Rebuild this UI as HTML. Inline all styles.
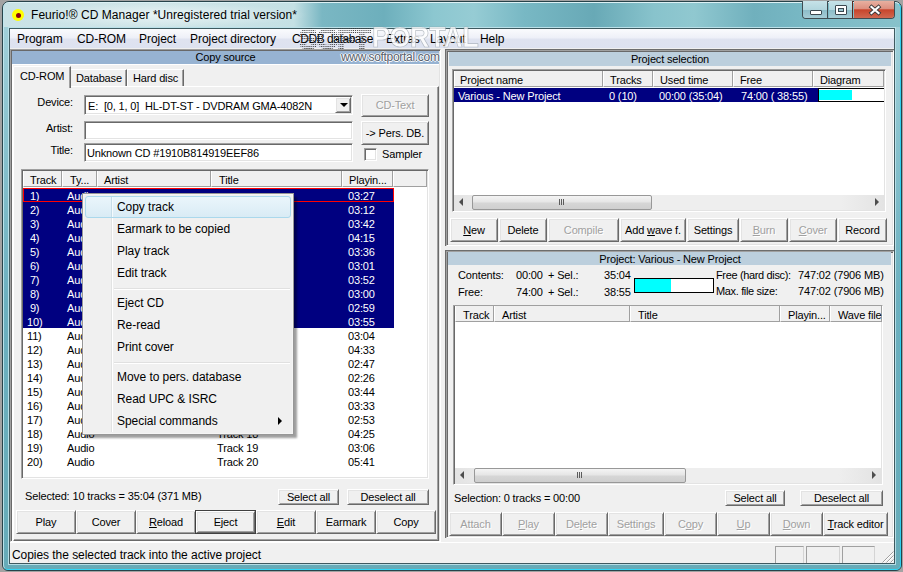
<!DOCTYPE html>
<html><head><meta charset="utf-8">
<style>
*{margin:0;padding:0;box-sizing:border-box}
html,body{width:903px;height:572px;overflow:hidden;background:#a3a3a3}
body{position:relative;font-family:"Liberation Sans",sans-serif;font-size:11px;color:#000}
.a{position:absolute}
.t{position:absolute;white-space:nowrap;line-height:14px;letter-spacing:-0.15px}
.raised{border:1px solid;border-color:#fff #696969 #696969 #fff;box-shadow:inset 1px 1px #e3e3e3,inset -1px -1px #a0a0a0;background:#f0f0f0}
.sunk{border:1px solid;border-color:#a0a0a0 #fff #fff #a0a0a0;box-shadow:inset 1px 1px #696969,inset -1px -1px #e3e3e3}
.btn{position:absolute;letter-spacing:-0.15px;border:1px solid;border-color:#fff #696969 #696969 #fff;box-shadow:inset 1px 1px #e3e3e3,inset -1px -1px #a0a0a0;background:#f0f0f0;text-align:center;line-height:20px;white-space:nowrap}
.dis{color:#a0a0a0;text-shadow:1px 1px #fff}
.seg{font-size:12px;letter-spacing:-0.05px}
</style></head><body>
<!-- window frame -->
<div class="a" style="left:2px;top:1px;width:900px;height:570px;border-radius:7px 7px 6px 6px;background:linear-gradient(#a6d3dc 0px,#8cc4cf 120px,#6cb0bf 300px,#66abb8 570px);border:1px solid #27434a"></div>
<div class="a" style="left:3px;top:2px;width:898px;height:568px;border-radius:6px 6px 5px 5px;border:1px solid;border-color:rgba(230,246,250,.85) #30d0f0 #30d8f8 rgba(200,235,242,.85)"></div>
<div class="a" style="left:4px;top:3px;width:896px;height:24px;border-radius:5px 5px 0 0;background:linear-gradient(90deg,#c9e2e6 0px,#cfe5e8 150px,#c4e0e4 290px,#7ab7c3 318px,#6dafbc 380px,#8cc7d0 430px,#96ccd4 470px,#78b8c4 520px,#68a9b6 590px,#88c3cc 650px,#90c8d0 690px,#70b0bd 750px,#78b8c4 800px,#88c2cb 900px)"></div>
<div class="a" style="left:20px;top:3px;width:290px;height:24px;background:radial-gradient(ellipse at center,rgba(255,255,255,.55),rgba(255,255,255,0) 70%)"></div>
<!-- caption buttons -->
<div class="a" style="left:802px;top:1px;width:93px;height:18px;border:1px solid #404c52;border-top:none;border-radius:0 0 4px 4px;overflow:hidden">
 <div class="a" style="left:0;top:0;width:25px;height:17px;background:linear-gradient(#c6e2e8 0%,#b2d6de 50%,#8cbcc8 52%,#a6ccd6 100%);border-right:1px solid #3e4a50"></div>
 <div class="a" style="left:26px;top:0;width:24px;height:17px;background:linear-gradient(#c6e2e8 0%,#b2d6de 50%,#8cbcc8 52%,#a6ccd6 100%);border-right:1px solid #5a2a20"></div>
 <div class="a" style="left:51px;top:0;width:42px;height:17px;background:linear-gradient(#e8b0a0 0%,#dc9080 45%,#c8452c 52%,#d06850 100%)"></div>
 <div class="a" style="left:7px;top:9px;width:12px;height:5px;background:#fff;border:1px solid #3c4850;border-radius:1px"></div>
 <div class="a" style="left:32px;top:4px;width:12px;height:10px;border:1px solid #3c4850;border-radius:1px;background:#fff"></div>
 <div class="a" style="left:35px;top:7px;width:6px;height:4px;border:1px solid #3c4850;background:#9cc6d0"></div>
 <svg class="a" style="left:64px;top:3px" width="16" height="12"><path d="M4.5 3L11.5 9M11.5 3L4.5 9" stroke="#3a3a3a" stroke-width="4" stroke-linecap="square"/><path d="M4.5 3L11.5 9M11.5 3L4.5 9" stroke="#fff" stroke-width="2.2" stroke-linecap="square"/></svg>
</div>
<!-- title -->
<div class="a" style="left:12px;top:9px;width:12px;height:12px;border-radius:50%;background:#ffff00"></div>
<div class="a" style="left:16px;top:13px;width:5px;height:5px;border-radius:50%;background:#8b0010"></div>
<div class="t seg" style="left:31px;top:8px;letter-spacing:0.05px;color:#000">Feurio!® CD Manager *Unregistered trial version*</div>
<!-- client -->
<div class="a" style="left:9px;top:28px;width:886px;height:536px;background:#f0f0f0;border:1px solid #3e5a60;box-shadow:0 0 0 1px rgba(190,226,234,.9)"></div>
<!-- menu bar -->
<div class="a" style="left:10px;top:29px;width:884px;height:19px;background:linear-gradient(#fafbfd 0%,#eef0f8 45%,#dfe3f0 55%,#dde2f0 100%)"></div>
<div class="t seg" style="left:17px;top:32px">Program</div>
<div class="t seg" style="left:77px;top:32px">CD-ROM</div>
<div class="t seg" style="left:139px;top:32px">Project</div>
<div class="t seg" style="left:190px;top:32px">Project directory</div>
<div class="t seg" style="left:292px;top:32px;letter-spacing:-0.45px">CDDB database</div>
<div class="t seg" style="left:386px;top:32px">Extras</div>
<div class="t seg" style="left:430px;top:32px">Layout</div>
<div class="t seg" style="left:480px;top:32px">Help</div>

<!-- LEFT PANEL -->
<div class="a sunk" style="left:10px;top:49px;width:431px;height:493px"></div>
<div class="a" style="left:12px;top:51px;width:427px;height:13px;background:#97b3d2"></div>
<div class="t" style="left:12px;top:50px;width:427px;text-align:center">Copy source</div>

<div class="a" style="left:12px;top:64px;width:427px;height:477px;border-left:1px solid #fff;border-top:1px solid #fff"></div>
<div class="a" style="left:13px;top:86px;width:426px;height:455px;border:1px solid;border-color:#fff #696969 #696969 #fff;box-shadow:inset -1px -1px #a0a0a0"></div>
<div class="a" style="left:70px;top:69px;width:57px;height:17px;border:1px solid;border-bottom:none;border-color:#fff #696969 #fff #fff;box-shadow:inset -1px 0 #a0a0a0;background:#f0f0f0"></div>
<div class="a" style="left:127px;top:69px;width:57px;height:17px;border:1px solid;border-bottom:none;border-color:#fff #696969 #fff #fff;box-shadow:inset -1px 0 #a0a0a0;background:#f0f0f0"></div>
<div class="a" style="left:13px;top:66px;width:58px;height:22px;border:1px solid;border-bottom:none;border-color:#fff #696969 #fff #fff;box-shadow:inset -1px 0 #a0a0a0;background:#f0f0f0;border-top-left-radius:2px"></div>
<div class="t" style="left:20px;top:69px">CD-ROM</div>
<div class="t" style="left:76px;top:71px">Database</div>
<div class="t" style="left:133px;top:71px">Hard disc</div>
<div class="t" style="left:20px;width:53px;text-align:right;top:95px">Device:</div>
<div class="t" style="left:20px;width:53px;text-align:right;top:121px">Artist:</div>
<div class="t" style="left:20px;width:53px;text-align:right;top:143px">Title:</div>
<div class="a sunk" style="left:84px;top:95px;width:269px;height:20px;background:#fff"></div>
<div class="t" style="left:88px;top:99px">E:&nbsp; [0, 1, 0]&nbsp; HL-DT-ST - DVDRAM GMA-4082N</div>
<div class="a raised" style="left:335px;top:97px;width:16px;height:16px"></div>
<div class="a" style="left:340px;top:103px;width:0;height:0;border-left:4px solid transparent;border-right:4px solid transparent;border-top:4px solid #000"></div>
<div class="a sunk" style="left:84px;top:121px;width:269px;height:19px;background:#fff"></div>
<div class="a sunk" style="left:84px;top:143px;width:269px;height:19px;background:#fff"></div>
<div class="t" style="left:87px;top:146px">Unknown CD #1910B814919EEF86</div>
<div class="btn dis" style="left:361px;top:94px;width:68px;height:23px;line-height:21px">CD-Text</div>
<div class="btn" style="left:361px;top:121px;width:68px;height:24px;line-height:22px">-&gt; Pers. DB.</div>
<div class="a sunk" style="left:364px;top:148px;width:13px;height:13px;background:#fff"></div>
<div class="t" style="left:382px;top:147px">Sampler</div>
<div class="a sunk" style="left:21px;top:169px;width:408px;height:310px;background:#fff"></div>
<div class="a" style="left:23px;top:171px;width:404px;height:16px;background:#f0f0f0;border-bottom:1px solid #a0a0a0"></div>
<div class="a" style="left:23px;top:171px;width:39px;height:16px;border-left:1px solid #fff;border-right:1px solid #a0a0a0;border-bottom:1px solid #a0a0a0"></div>
<div class="t" style="left:30px;top:173px">Track</div>
<div class="a" style="left:62px;top:171px;width:35px;height:16px;border-left:1px solid #fff;border-right:1px solid #a0a0a0;border-bottom:1px solid #a0a0a0"></div>
<div class="t" style="left:70px;top:173px">Ty...</div>
<div class="a" style="left:97px;top:171px;width:114px;height:16px;border-left:1px solid #fff;border-right:1px solid #a0a0a0;border-bottom:1px solid #a0a0a0"></div>
<div class="t" style="left:104px;top:173px">Artist</div>
<div class="a" style="left:211px;top:171px;width:131px;height:16px;border-left:1px solid #fff;border-right:1px solid #a0a0a0;border-bottom:1px solid #a0a0a0"></div>
<div class="t" style="left:219px;top:173px">Title</div>
<div class="a" style="left:342px;top:171px;width:51px;height:16px;border-left:1px solid #fff;border-right:1px solid #a0a0a0;border-bottom:1px solid #a0a0a0"></div>
<div class="t" style="left:349px;top:173px">Playin...</div>
<div class="a" style="left:393px;top:171px;width:34px;height:16px;border-left:1px solid #fff;border-right:1px solid #a0a0a0;border-bottom:1px solid #a0a0a0"></div>
<div class="a" style="left:23px;top:188px;width:371px;height:14px;background:#000080"></div>
<div class="t" style="left:27px;top:189px;color:#fff">&nbsp;1)</div>
<div class="t" style="left:67px;top:189px;color:#fff">Audio</div>
<div class="t" style="left:348px;top:189px;color:#fff">03:27</div>
<div class="a" style="left:23px;top:202px;width:371px;height:14px;background:#000080"></div>
<div class="t" style="left:27px;top:203px;color:#fff">&nbsp;2)</div>
<div class="t" style="left:67px;top:203px;color:#fff">Audio</div>
<div class="t" style="left:348px;top:203px;color:#fff">03:12</div>
<div class="a" style="left:23px;top:216px;width:371px;height:14px;background:#000080"></div>
<div class="t" style="left:27px;top:217px;color:#fff">&nbsp;3)</div>
<div class="t" style="left:67px;top:217px;color:#fff">Audio</div>
<div class="t" style="left:348px;top:217px;color:#fff">03:42</div>
<div class="a" style="left:23px;top:230px;width:371px;height:14px;background:#000080"></div>
<div class="t" style="left:27px;top:231px;color:#fff">&nbsp;4)</div>
<div class="t" style="left:67px;top:231px;color:#fff">Audio</div>
<div class="t" style="left:348px;top:231px;color:#fff">04:15</div>
<div class="a" style="left:23px;top:244px;width:371px;height:14px;background:#000080"></div>
<div class="t" style="left:27px;top:245px;color:#fff">&nbsp;5)</div>
<div class="t" style="left:67px;top:245px;color:#fff">Audio</div>
<div class="t" style="left:348px;top:245px;color:#fff">03:36</div>
<div class="a" style="left:23px;top:258px;width:371px;height:14px;background:#000080"></div>
<div class="t" style="left:27px;top:259px;color:#fff">&nbsp;6)</div>
<div class="t" style="left:67px;top:259px;color:#fff">Audio</div>
<div class="t" style="left:348px;top:259px;color:#fff">03:01</div>
<div class="a" style="left:23px;top:272px;width:371px;height:14px;background:#000080"></div>
<div class="t" style="left:27px;top:273px;color:#fff">&nbsp;7)</div>
<div class="t" style="left:67px;top:273px;color:#fff">Audio</div>
<div class="t" style="left:348px;top:273px;color:#fff">03:52</div>
<div class="a" style="left:23px;top:286px;width:371px;height:14px;background:#000080"></div>
<div class="t" style="left:27px;top:287px;color:#fff">&nbsp;8)</div>
<div class="t" style="left:67px;top:287px;color:#fff">Audio</div>
<div class="t" style="left:348px;top:287px;color:#fff">03:00</div>
<div class="a" style="left:23px;top:300px;width:371px;height:14px;background:#000080"></div>
<div class="t" style="left:27px;top:301px;color:#fff">&nbsp;9)</div>
<div class="t" style="left:67px;top:301px;color:#fff">Audio</div>
<div class="t" style="left:348px;top:301px;color:#fff">02:59</div>
<div class="a" style="left:23px;top:314px;width:371px;height:14px;background:#000080"></div>
<div class="t" style="left:27px;top:315px;color:#fff">10)</div>
<div class="t" style="left:67px;top:315px;color:#fff">Audio</div>
<div class="t" style="left:348px;top:315px;color:#fff">03:55</div>
<div class="t" style="left:27px;top:329px;color:#000">11)</div>
<div class="t" style="left:67px;top:329px;color:#000">Audio</div>
<div class="t" style="left:348px;top:329px;color:#000">03:04</div>
<div class="t" style="left:27px;top:343px;color:#000">12)</div>
<div class="t" style="left:67px;top:343px;color:#000">Audio</div>
<div class="t" style="left:348px;top:343px;color:#000">04:33</div>
<div class="t" style="left:27px;top:357px;color:#000">13)</div>
<div class="t" style="left:67px;top:357px;color:#000">Audio</div>
<div class="t" style="left:348px;top:357px;color:#000">02:47</div>
<div class="t" style="left:27px;top:371px;color:#000">14)</div>
<div class="t" style="left:67px;top:371px;color:#000">Audio</div>
<div class="t" style="left:348px;top:371px;color:#000">02:26</div>
<div class="t" style="left:27px;top:385px;color:#000">15)</div>
<div class="t" style="left:67px;top:385px;color:#000">Audio</div>
<div class="t" style="left:348px;top:385px;color:#000">03:44</div>
<div class="t" style="left:27px;top:399px;color:#000">16)</div>
<div class="t" style="left:67px;top:399px;color:#000">Audio</div>
<div class="t" style="left:348px;top:399px;color:#000">03:33</div>
<div class="t" style="left:27px;top:413px;color:#000">17)</div>
<div class="t" style="left:67px;top:413px;color:#000">Audio</div>
<div class="t" style="left:348px;top:413px;color:#000">02:53</div>
<div class="t" style="left:27px;top:427px;color:#000">18)</div>
<div class="t" style="left:67px;top:427px;color:#000">Audio</div>
<div class="t" style="left:217px;top:427px;color:#000">Track 18</div>
<div class="t" style="left:348px;top:427px;color:#000">04:25</div>
<div class="t" style="left:27px;top:441px;color:#000">19)</div>
<div class="t" style="left:67px;top:441px;color:#000">Audio</div>
<div class="t" style="left:217px;top:441px;color:#000">Track 19</div>
<div class="t" style="left:348px;top:441px;color:#000">03:06</div>
<div class="t" style="left:27px;top:455px;color:#000">20)</div>
<div class="t" style="left:67px;top:455px;color:#000">Audio</div>
<div class="t" style="left:217px;top:455px;color:#000">Track 20</div>
<div class="t" style="left:348px;top:455px;color:#000">05:41</div>
<div class="a" style="left:23px;top:188px;width:371px;height:14px;border:1px solid #ff0000"></div>
<div class="t" style="left:25px;top:489px">Selected: 10 tracks = 35:04 (371 MB)</div>
<div class="btn" style="left:278px;top:489px;width:61px;height:16px;line-height:14px">Select all</div>
<div class="btn" style="left:347px;top:489px;width:82px;height:16px;line-height:14px">Deselect all</div>
<div class="btn" style="left:16px;top:510px;width:60px;height:24px;line-height:22px">Play</div>
<div class="btn" style="left:76px;top:510px;width:60px;height:24px;line-height:22px">Cover</div>
<div class="btn" style="left:136px;top:510px;width:60px;height:24px;line-height:22px"><u>R</u>eload</div>
<div class="btn" style="left:196px;top:511px;width:59px;height:22px;line-height:20px">Eject</div>
<div class="btn" style="left:256px;top:510px;width:60px;height:24px;line-height:22px"><u>E</u>dit</div>
<div class="btn" style="left:316px;top:510px;width:60px;height:24px;line-height:22px">Earmark</div>
<div class="btn" style="left:376px;top:510px;width:60px;height:24px;line-height:22px">Copy</div>
<div class="a" style="left:195px;top:510px;width:61px;height:24px;border:1px solid #404040"></div>
<!-- MENU -->
<div class="a" style="left:82px;top:193px;width:212px;height:242px;background:#f0f0f0;border:1px solid #979797;box-shadow:3px 3px 2px -0.5px rgba(0,0,0,.38)"></div>
<div class="a" style="left:83px;top:194px;width:210px;height:240px;border:1px solid #f5f5f5"></div>
<div class="a" style="left:111px;top:196px;width:1px;height:236px;background:#e2e3e3"></div>
<div class="a" style="left:112px;top:196px;width:1px;height:236px;background:#fff"></div>
<div class="a" style="left:85px;top:196px;width:206px;height:22px;border:1px solid #aad8ec;border-radius:3px;background:linear-gradient(#eaf5fb,#d9ebf5)"></div>
<div class="a" style="left:111px;top:197px;width:1px;height:20px;background:#c6dde9"></div><div class="a" style="left:112px;top:197px;width:1px;height:20px;background:#f4fafd"></div>
<div class="t seg" style="left:117px;top:200px">Copy track</div>
<div class="t seg" style="left:117px;top:222px">Earmark to be copied</div>
<div class="t seg" style="left:117px;top:244px">Play track</div>
<div class="t seg" style="left:117px;top:266px">Edit track</div>
<div class="t seg" style="left:117px;top:296px">Eject CD</div>
<div class="t seg" style="left:117px;top:318px">Re-read</div>
<div class="t seg" style="left:117px;top:340px">Print cover</div>
<div class="t seg" style="left:117px;top:370px">Move to pers. database</div>
<div class="t seg" style="left:117px;top:392px">Read UPC &amp; ISRC</div>
<div class="t seg" style="left:117px;top:414px">Special commands</div>
<div class="a" style="left:114px;top:288px;width:176px;height:1px;background:#e0e0e0"></div>
<div class="a" style="left:114px;top:289px;width:176px;height:1px;background:#fff"></div>
<div class="a" style="left:114px;top:362px;width:176px;height:1px;background:#e0e0e0"></div>
<div class="a" style="left:114px;top:363px;width:176px;height:1px;background:#fff"></div>
<div class="a" style="left:278px;top:417px;width:0;height:0;border-top:4px solid transparent;border-bottom:4px solid transparent;border-left:4px solid #000"></div>
<!-- RIGHT PANELS -->
<div class="a" style="left:445px;top:49px;width:449px;height:197px;border-left:1px solid #6d6d6d;border-top:1px solid #6d6d6d"></div>
<div class="a sunk" style="left:446px;top:50px;width:448px;height:196px"></div>
<div class="a" style="left:449px;top:52px;width:442px;height:14px;background:#bccfdd"></div>
<div class="t" style="left:449px;top:52px;width:442px;text-align:center">Project selection</div>
<div class="a sunk" style="left:452px;top:69px;width:434px;height:143px;background:#fff"></div>
<div class="a" style="left:454px;top:71px;width:430px;height:16px;background:#f0f0f0"></div>
<div class="a" style="left:454px;top:71px;width:149px;height:16px;border-left:1px solid #fff;border-right:1px solid #a0a0a0;border-bottom:1px solid #a0a0a0"></div>
<div class="t" style="left:460px;top:73px">Project name</div>
<div class="a" style="left:603px;top:71px;width:50px;height:16px;border-left:1px solid #fff;border-right:1px solid #a0a0a0;border-bottom:1px solid #a0a0a0"></div>
<div class="t" style="left:610px;top:73px">Tracks</div>
<div class="a" style="left:653px;top:71px;width:80px;height:16px;border-left:1px solid #fff;border-right:1px solid #a0a0a0;border-bottom:1px solid #a0a0a0"></div>
<div class="t" style="left:660px;top:73px">Used time</div>
<div class="a" style="left:733px;top:71px;width:80px;height:16px;border-left:1px solid #fff;border-right:1px solid #a0a0a0;border-bottom:1px solid #a0a0a0"></div>
<div class="t" style="left:740px;top:73px">Free</div>
<div class="a" style="left:813px;top:71px;width:71px;height:16px;border-left:1px solid #fff;border-right:1px solid #a0a0a0;border-bottom:1px solid #a0a0a0"></div>
<div class="t" style="left:820px;top:73px">Diagram</div>
<div class="a" style="left:454px;top:88px;width:430px;height:14px;background:#000080"></div>
<div class="t" style="left:458px;top:89px;color:#fff">Various - New Project</div>
<div class="t" style="left:609px;top:89px;color:#fff">0 (10)</div>
<div class="t" style="left:659px;top:89px;color:#fff">00:00 (35:04)</div>
<div class="t" style="left:741px;top:89px;color:#fff">74:00 ( 38:55)</div>
<div class="a" style="left:818px;top:88px;width:66px;height:14px;background:#000"></div>
<div class="a" style="left:819px;top:89px;width:65px;height:12px;background:#fff"></div>
<div class="a" style="left:819px;top:90px;width:33px;height:10px;background:#00ffff"></div>
<div class="a" style="left:454px;top:195px;width:430px;height:15px;background:linear-gradient(90deg,#e3e3e3,#eeeeee 10%,#eeeeee 90%,#e3e3e3)"></div>
<div class="a" style="left:459px;top:198px;width:0;height:0;border-top:4px solid transparent;border-bottom:4px solid transparent;border-right:4px solid #4d4d4d"></div>
<div class="a" style="left:875px;top:198px;width:0;height:0;border-top:4px solid transparent;border-bottom:4px solid transparent;border-left:4px solid #4d4d4d"></div>
<div class="a" style="left:472px;top:195px;width:180px;height:15px;border:1px solid #989898;border-radius:2px;background:linear-gradient(#f4f4f4,#e6e6e6 45%,#d6d6d6 55%,#cfcfcf)"></div>
<div class="a" style="left:559px;top:199px;width:1px;height:6px;background:#5c5c5c"></div>
<div class="a" style="left:561px;top:199px;width:1px;height:6px;background:#5c5c5c"></div>
<div class="a" style="left:563px;top:199px;width:1px;height:6px;background:#5c5c5c"></div>

<div class="btn" style="left:450px;top:218px;width:48px;height:24px;line-height:22px"><u>N</u>ew</div>
<div class="btn" style="left:499px;top:218px;width:48px;height:24px;line-height:22px">Delete</div>
<div class="btn dis" style="left:548px;top:218px;width:71px;height:24px;line-height:22px">Compile</div>
<div class="btn" style="left:620px;top:218px;width:66px;height:24px;line-height:22px">Add <u>w</u>ave f.</div>
<div class="btn" style="left:687px;top:218px;width:52px;height:24px;line-height:22px">Settings</div>
<div class="btn dis" style="left:740px;top:218px;width:48px;height:24px;line-height:22px"><u>B</u>urn</div>
<div class="btn dis" style="left:789px;top:218px;width:48px;height:24px;line-height:22px"><u>C</u>over</div>
<div class="btn" style="left:838px;top:218px;width:49px;height:24px;line-height:22px">Record</div>
<div class="a" style="left:445px;top:250px;width:449px;height:288px;border-left:1px solid #6d6d6d;border-top:1px solid #6d6d6d"></div>
<div class="a sunk" style="left:446px;top:251px;width:448px;height:287px"></div>
<div class="a" style="left:448px;top:252px;width:443px;height:13px;background:#bccfdd"></div>
<div class="t" style="left:449px;top:252px;width:442px;text-align:center">Project: Various - New Project</div>
<div class="t" style="left:458px;top:268px">Contents:</div>
<div class="t" style="left:516px;top:268px">00:00</div>
<div class="t" style="left:548px;top:268px">+ Sel.:</div>
<div class="t" style="left:604px;top:268px">35:04</div>
<div class="t" style="left:458px;top:285px">Free:</div>
<div class="t" style="left:516px;top:285px">74:00</div>
<div class="t" style="left:548px;top:285px">+ Sel.:</div>
<div class="t" style="left:604px;top:285px">38:55</div>
<div class="t" style="left:716px;top:268px;letter-spacing:-0.35px">Free (hard disc):</div>
<div class="t" style="left:798px;top:268px">747:02 (7906 MB)</div>
<div class="t" style="left:716px;top:284px;letter-spacing:-0.35px">Max. file size:</div>
<div class="t" style="left:798px;top:284px">747:02 (7906 MB)</div>
<div class="a" style="left:634px;top:278px;width:80px;height:15px;border:1px solid #000;background:#fff"></div>
<div class="a" style="left:635px;top:279px;width:36px;height:13px;background:#00ffff"></div>
<div class="a sunk" style="left:453px;top:305px;width:430px;height:180px;background:#fff"></div>
<div class="a" style="left:455px;top:306px;width:427px;height:16px;background:#f0f0f0"></div>
<div class="a" style="left:455px;top:306px;width:39px;height:16px;border-left:1px solid #fff;border-right:1px solid #a0a0a0;border-bottom:1px solid #a0a0a0"></div>
<div class="t" style="left:463px;top:308px">Track</div>
<div class="a" style="left:494px;top:306px;width:136px;height:16px;border-left:1px solid #fff;border-right:1px solid #a0a0a0;border-bottom:1px solid #a0a0a0"></div>
<div class="t" style="left:502px;top:308px">Artist</div>
<div class="a" style="left:630px;top:306px;width:150px;height:16px;border-left:1px solid #fff;border-right:1px solid #a0a0a0;border-bottom:1px solid #a0a0a0"></div>
<div class="t" style="left:638px;top:308px">Title</div>
<div class="a" style="left:780px;top:306px;width:50px;height:16px;border-left:1px solid #fff;border-right:1px solid #a0a0a0;border-bottom:1px solid #a0a0a0"></div>
<div class="t" style="left:788px;top:308px">Playin...</div>
<div class="a" style="left:830px;top:306px;width:52px;height:16px;border-left:1px solid #fff;border-right:1px solid #a0a0a0;border-bottom:1px solid #a0a0a0"></div>
<div class="t" style="left:838px;top:308px;width:44px;overflow:hidden">Wave file</div>
<div class="a" style="left:882px;top:306px;width:1px;height:16px;background:#fff"></div>
<div class="a" style="left:455px;top:468px;width:426px;height:15px;background:linear-gradient(90deg,#e3e3e3,#eeeeee 10%,#eeeeee 90%,#e3e3e3)"></div>
<div class="a" style="left:460px;top:471px;width:0;height:0;border-top:4px solid transparent;border-bottom:4px solid transparent;border-right:4px solid #4d4d4d"></div>
<div class="a" style="left:872px;top:471px;width:0;height:0;border-top:4px solid transparent;border-bottom:4px solid transparent;border-left:4px solid #4d4d4d"></div>
<div class="a" style="left:474px;top:468px;width:212px;height:15px;border:1px solid #989898;border-radius:2px;background:linear-gradient(#f4f4f4,#e6e6e6 45%,#d6d6d6 55%,#cfcfcf)"></div>
<div class="a" style="left:577px;top:472px;width:1px;height:6px;background:#5c5c5c"></div>
<div class="a" style="left:579px;top:472px;width:1px;height:6px;background:#5c5c5c"></div>
<div class="a" style="left:581px;top:472px;width:1px;height:6px;background:#5c5c5c"></div>
<div class="t" style="left:454px;top:491px">Selection: 0 tracks = 00:00</div>
<div class="btn" style="left:725px;top:490px;width:60px;height:16px;line-height:14px">Select all</div>
<div class="btn" style="left:800px;top:490px;width:83px;height:16px;line-height:14px">Deselect all</div>
<div class="btn dis" style="left:449px;top:512px;width:53px;height:24px;line-height:22px">Attach</div>
<div class="btn dis" style="left:502px;top:512px;width:53px;height:24px;line-height:22px"><u>P</u>lay</div>
<div class="btn dis" style="left:555px;top:512px;width:53px;height:24px;line-height:22px">De<u>l</u>ete</div>
<div class="btn dis" style="left:608px;top:512px;width:56px;height:24px;line-height:22px">Settings</div>
<div class="btn dis" style="left:664px;top:512px;width:53px;height:24px;line-height:22px">C<u>o</u>py</div>
<div class="btn dis" style="left:717px;top:512px;width:53px;height:24px;line-height:22px"><u>U</u>p</div>
<div class="btn dis" style="left:770px;top:512px;width:53px;height:24px;line-height:22px"><u>D</u>own</div>
<div class="btn" style="left:823px;top:512px;width:65px;height:24px;line-height:22px"><u>T</u>rack editor</div>
<!-- STATUS BAR -->
<div class="t seg" style="left:12px;top:548px">Copies the selected track into the active project</div>
<div class="a" style="left:10px;top:542px;width:884px;height:1px;background:#fff"></div>
<div class="a" style="left:775px;top:546px;width:29px;height:17px;border:1px solid #a0a0a0;border-bottom:none;border-right-color:#d4d4d4"></div>
<div class="a" style="left:806px;top:546px;width:34px;height:17px;border:1px solid #a0a0a0;border-bottom:none;border-right-color:#d4d4d4"></div>
<div class="a" style="left:842px;top:546px;width:33px;height:17px;border:1px solid #a0a0a0;border-bottom:none;border-right-color:#d4d4d4"></div>
<svg class="a" style="left:880px;top:549px" width="14" height="14"><path d="M13.5 2.5L2.5 13.5M13.5 6.5L6.5 13.5M13.5 10.5L10.5 13.5" stroke="#a0a0a0" stroke-width="1"/><path d="M13.5 3.5L3.5 13.5M13.5 7.5L7.5 13.5M13.5 11.5L11.5 13.5" stroke="#fff" stroke-width="1"/></svg>
<!-- watermark -->
<svg class="a" style="left:298px;top:24px" width="80" height="30"><defs><pattern id="dp" width="2" height="2" patternUnits="userSpaceOnUse"><rect width="1" height="1" fill="#333"/></pattern></defs><text x="1" y="25" font-family="Liberation Sans" font-weight="bold" font-size="30" letter-spacing="-1.5" transform="scale(.95,1)" fill="url(#dp)" stroke="url(#dp)" stroke-width="1.5" opacity=".9">SOFT</text></svg>
<div class="a" style="left:372px;top:22px;font:bold 30px 'Liberation Sans',sans-serif;line-height:30px;letter-spacing:-0.5px;transform:scaleX(.9);transform-origin:0 0;color:rgba(255,255,255,.8);-webkit-text-stroke:0.7px rgba(130,140,150,.55)">PORTAL</div>
<div class="a" style="left:341px;top:50px;font-size:12px;line-height:14px;letter-spacing:-0.3px;color:#58606c;text-shadow:1px 0 #fff,-1px 0 #fff,0 1px #fff,0 -1px rgba(255,255,255,.6)">www.softportal.com</div>
</body></html>
